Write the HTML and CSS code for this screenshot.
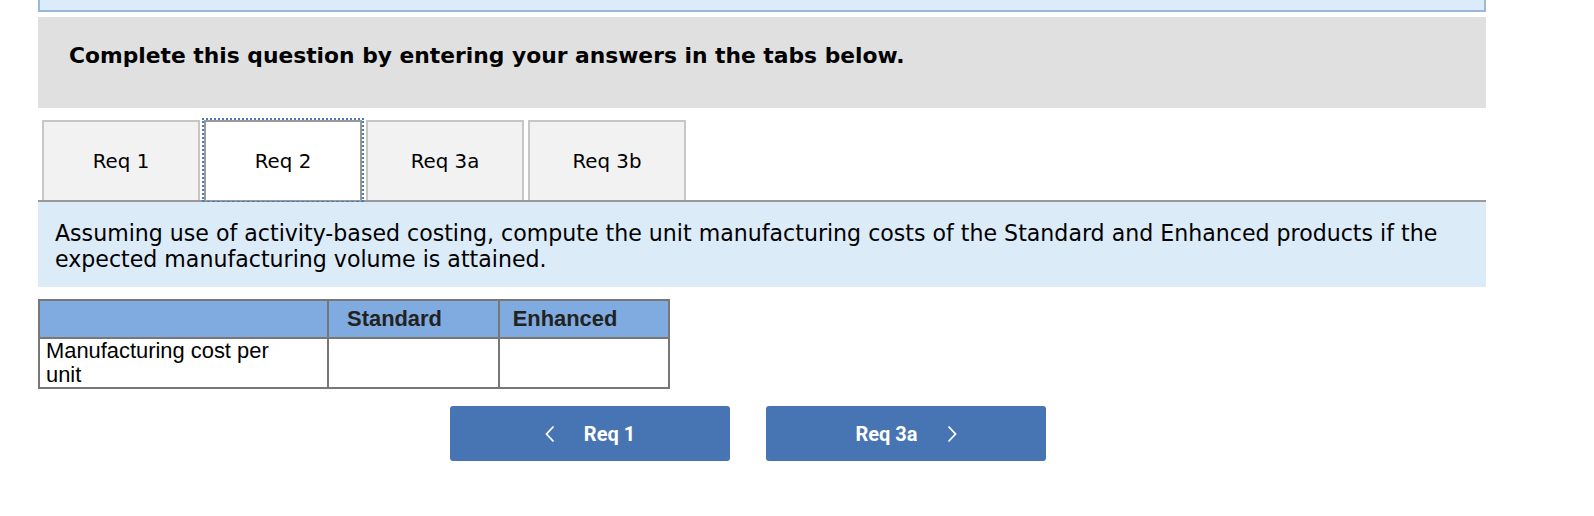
FILE: index.html
```html
<!DOCTYPE html>
<html lang="en">
<head>
  <meta charset="UTF-8" />
  <title>Req 2</title>
  <link rel="stylesheet" href="styles.css">
</head>
<body>
  <main class="question">
    <div class="top-box"></div>

    <!-- Instructions -->
    <div class="prompt">
      <h2>Complete this question by entering your answers in the tabs below.</h2>
    </div>

    <!-- Tabs -->
    <div class="tabs">
      <div class="tab">Req 1</div>
      <div class="tab active">Req 2</div>
      <div class="tab">Req 3a</div>
      <div class="tab">Req 3b</div>
    </div>

    <div class="task">
      Assuming use of activity-based costing, compute the unit manufacturing costs of the Standard and Enhanced products if the expected manufacturing volume is attained.
    </div>

    <!-- Answer table -->
    <table class="answer">
      <tr>
        <th class="col-label"></th>
        <th class="col-std">Standard</th>
        <th class="col-enh">Enhanced</th>
      </tr>
      <tr>
        <td class="row-label"><span>Manufacturing cost per unit</span></td>
        <td></td>
        <td></td>
      </tr>
    </table>

    <div class="nav">
      <button class="nav-button">
        <svg width="10" height="18" viewBox="0 0 10 18"><polyline points="8.5,1.5 1.5,9 8.5,16.5" /></svg>
        <span>Req 1</span>
      </button>
      <button class="nav-button">
        <span>Req 3a</span>
        <svg width="10" height="18" viewBox="0 0 10 18"><polyline points="1.5,1.5 8.5,9 1.5,16.5" /></svg>
      </button>
    </div>
  </main>
</body>
</html>
```

FILE: styles.css
```css
body {
  margin: 0;
  background: #fff;
  font-family: "DejaVu Sans", Verdana, sans-serif;
  color: #000;
}

.question {
  width: 1448px;
  margin-left: 38px;
}

/* Box cut off at the top of the page */
.top-box {
  height: 10px;
  background: #dcebf9;
  border: 2px solid #9ab9da;
  border-top: none;
}

.prompt {
  box-sizing: border-box;
  margin-top: 5px;
  height: 91px;
  padding: 26px 31px 0;
  background: #e0e0e0;
}

.prompt h2 {
  margin: 0;
  font-size: 21.8px;
  font-weight: 700;
}

/* Tabs */
.tabs {
  display: flex;
  margin-top: 12px;
  padding-left: 4px;
  border-bottom: 2px solid #999;
}

.tab {
  box-sizing: border-box;
  position: relative;
  width: 158px;
  height: 80px;
  margin-right: 4px;
  display: flex;
  align-items: center;
  justify-content: center;
  padding-top: 1px;
  background: #f2f2f2;
  border: 2px solid #c6c6c6;
  border-bottom: none;
  font-size: 19.8px;
}

.tab.active {
  background: #fff;
  border-color: #999;
}

/* focus ring round the active tab */
.tab.active::after {
  content: "";
  position: absolute;
  top: -4px;
  left: -4px;
  right: -4px;
  bottom: -2px;
  border: 2px dotted #4a78b8;
  border-bottom: 1px dashed #4a78b8;
}

.task {
  padding: 18px 17px 15px;
  background: #dcebf8;
  font-size: 22.1px;
  line-height: 26px;
}

/* Table */
.answer {
  margin-top: 12px;
  border-collapse: collapse;
  font-family: "Liberation Sans", Arial, sans-serif;
  font-size: 21.9px;
}

.answer th,
.answer td {
  border: 2px solid #777;
  padding: 0;
}

.answer th {
  height: 36px;
  background: #80abe0;
  color: #222;
  font-weight: 700;
  text-align: center;
  padding-right: 38px;
}

.answer th.col-label {
  width: 287px;
  padding: 0;
}

.col-std { width: 131px; }
.col-enh { width: 130px; }

.answer td {
  height: 48px;
  vertical-align: top;
}

.answer td.row-label {
  padding-left: 6px;
  line-height: 24px;
}

.row-label span {
  display: block;
  width: 240px;
}

/* Navigation buttons */
.nav {
  display: flex;
  gap: 36px;
  margin-top: 17px;
  padding-left: 412px;
}

.nav-button {
  box-sizing: border-box;
  width: 280px;
  height: 55px;
  display: flex;
  align-items: center;
  justify-content: center;
  gap: 29px;
  background: #4774b2;
  color: #fff;
  border: none;
  border-radius: 3px;
  font-family: Roboto, "Liberation Sans", sans-serif;
  font-size: 20px;
  font-weight: 700;
  cursor: pointer;
}

.nav-button svg polyline {
  fill: none;
  stroke: #fff;
  stroke-width: 1.8;
}
```
